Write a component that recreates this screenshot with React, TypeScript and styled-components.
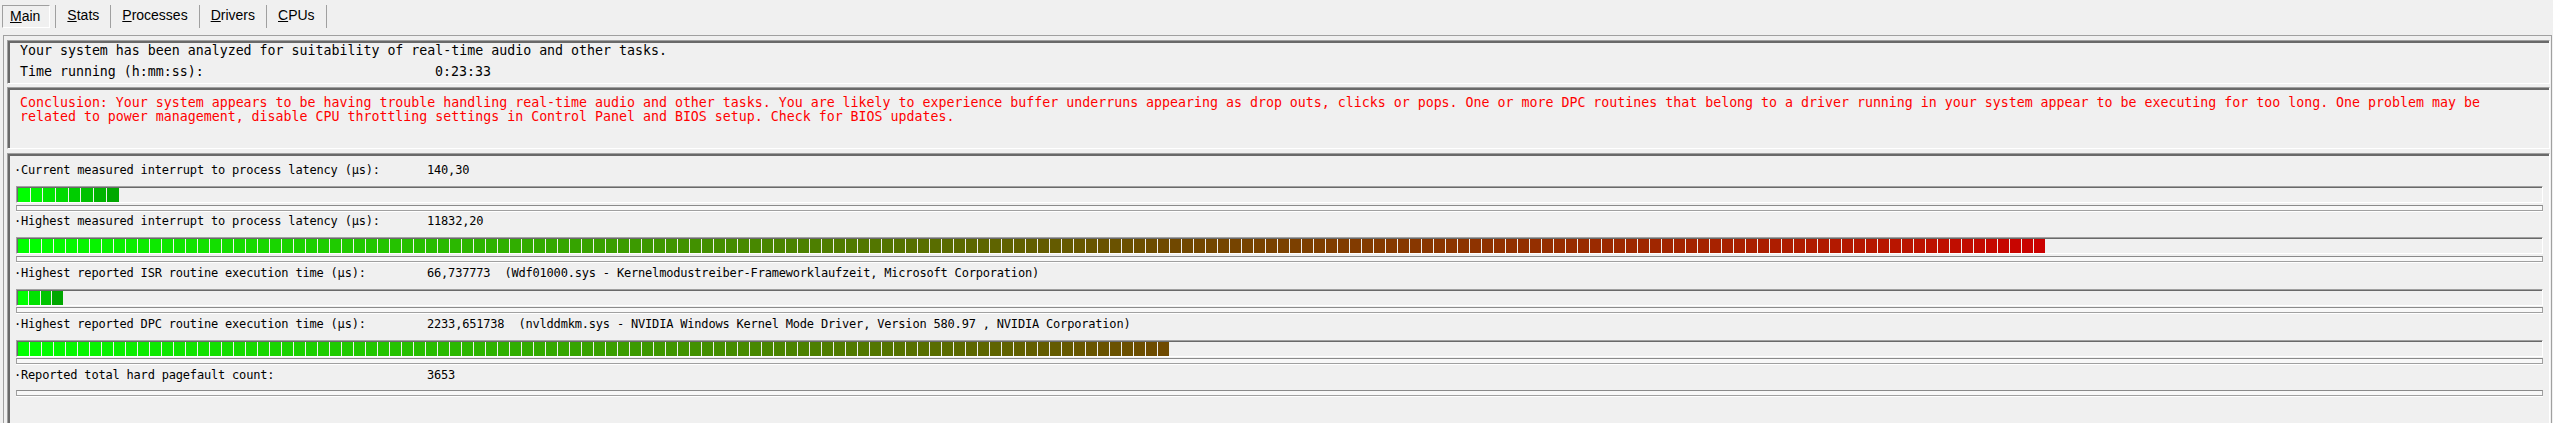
import styled, { createGlobalStyle, css } from 'styled-components';

const GlobalStyle = createGlobalStyle`
  html, body {
    margin: 0;
    padding: 0;
    background: #f0f0f0;
    overflow: hidden;
  }
`;

//Styled component
const Window = styled.div`
  width: 2553px;
  height: 423px;
  background: #f0f0f0;
  display: flex;
  flex-direction: column;
  overflow: hidden;
`;

const TabBar = styled.div`
  height: 35px;
  box-sizing: border-box;
  padding: 5px 0 0 2px;
  display: flex;
  align-items: flex-start;
  font-family: "Liberation Sans", Arial, sans-serif;
  font-size: 14px;
  color: #000;
  flex-shrink: 0;
`;

const Tab = styled.div<{ $active?: boolean; $first?: boolean }>`
  height: 23px;
  box-sizing: border-box;
  line-height: 21px;
  white-space: nowrap;
  ${p => p.$active ? css`
    padding: 0 9px 0 7px;
    border: 1px solid;
    border-color: #a0a0a0 #ffffff #ffffff #a0a0a0;
    margin-right: 5px;
  ` : css`
    padding: 0 11px;
    border-right: 1px solid #a0a0a0;
    ${p.$first && 'border-left: 1px solid #a0a0a0;'}
  `}
`;

const Panel = styled.div`
  flex: 1;
  min-height: 0;
  margin: 0 1px 0 3px;
  border: 1px solid #a0a0a0;
  border-bottom: none;
  padding: 4px 1px 0 3px;
  display: flex;
  flex-direction: column;
`;

const Sunken = styled.div<{ $top?: number }>`
  box-sizing: border-box;
  flex-shrink: 0;
  margin-top: ${p => p.$top ?? 0}px;
  border: 1px solid;
  border-color: #a0a0a0 #ffffff #ffffff #a0a0a0;
  box-shadow: inset 2px 2px 0 #696969;
`;

const InfoBox = styled(Sunken)`
  height: 44px;
  padding: 3px 12px 0 12px;
  font-family: "DejaVu Sans Mono", "Liberation Mono", monospace;
  font-size: 13.28px;
  line-height: 14px;
  color: #000;
`;

const InfoRow = styled.div<{ $gap?: number }>`
  display: grid;
  grid-template-columns: 415px auto;
  height: 14px;
  margin-top: ${p => p.$gap ?? 0}px;
  white-space: pre;
`;

const ConclusionBox = styled(Sunken)`
  height: 62px;
  padding: 8px 12px 0 12px;
  font-family: "DejaVu Sans Mono", "Liberation Mono", monospace;
  font-size: 13.28px;
  line-height: 14px;
  color: #ff0000;
  white-space: pre;
`;

const MetricsBox = styled(Sunken)`
  height: 290px;
  padding: 9px 6px 0 6px;
  font-family: "DejaVu Sans Mono", "Liberation Mono", monospace;
  font-size: 12px;
  letter-spacing: -0.19px;
  line-height: 14px;
  color: #000;
`;

const MetricRow = styled.div`
  display: flex;
  flex-direction: column;
  margin-bottom: 3.75px;
`;

const MetricLabel = styled.div`
  display: grid;
  grid-template-columns: 413px auto;
  height: 14px;
  white-space: pre;
`;

const Track = styled.div`
  margin: 9px 0 0 2px;
  height: 17px;
  box-sizing: border-box;
  border: 1px solid;
  border-color: #a0a0a0 #ffffff #ffffff #a0a0a0;
  box-shadow: inset 1px 1px 0 #696969;
  padding: 1px 0 0 1px;
  display: flex;
  gap: 1px;
  overflow: hidden;
`;

const Block = styled.div<{ $w: number }>`
  width: ${p => p.$w}px;
  height: 14px;
  flex-shrink: 0;
`;

const Rule = styled.div<{ $gap: number }>`
  margin: ${p => p.$gap}px 0 0 2px;
  height: 6px;
  box-sizing: border-box;
  border: 1px solid #a0a0a0;
  border-top-color: #8a8a8a;
  background: #f8f8f8;
  box-shadow: 0 1px 0 #ffffff;
`;
//Styled component

type Scale = 'green' | 'heat';

type Metric = {
  label: string;
  value: string;
  bar?: { count: number; width: number; scale: Scale };
};

const metrics: Metric[] = [
  { label: '·Current measured interrupt to process latency (µs):', value: '140,30', bar: { count: 8, width: 11.7, scale: 'green' } },
  { label: '·Highest measured interrupt to process latency (µs):', value: '11832,20', bar: { count: 169, width: 11, scale: 'heat' } },
  { label: '·Highest reported ISR routine execution time (µs):', value: '66,737773  (Wdf01000.sys - Kernelmodustreiber-Frameworklaufzeit, Microsoft Corporation)', bar: { count: 4, width: 10.4, scale: 'green' } },
  { label: '·Highest reported DPC routine execution time (µs):', value: '2233,651738  (nvlddmkm.sys - NVIDIA Windows Kernel Mode Driver, Version 580.97 , NVIDIA Corporation)', bar: { count: 96, width: 11, scale: 'heat' } },
  { label: '·Reported total hard pagefault count:', value: '3653' },
];

// green -> olive -> brown -> red, by position along the full track
const heatStops: [number, number, number][] = [
  [0, 0, 255],
  [0.29, 58, 158],
  [0.57, 112, 72],
  [0.93, 186, 20],
  [1, 204, 0],
];

function heatColor(t: number) {
  for (let i = 1; i < heatStops.length; i++) {
    const [t1, r1, g1] = heatStops[i];
    const [t0, r0, g0] = heatStops[i - 1];
    if (t <= t1) {
      const k = (t - t0) / (t1 - t0);
      return `rgb(${Math.round(r0 + (r1 - r0) * k)}, ${Math.round(g0 + (g1 - g0) * k)}, 0)`;
    }
  }
  return 'rgb(204, 0, 0)';
}

function blockColor(scale: Scale, i: number, count: number) {
  if (scale === 'green') {
    const t = count > 1 ? i / (count - 1) : 0;
    return `rgb(0, ${Math.round(255 - 87 * t)}, 0)`;
  }
  return heatColor(Math.min(1, (i * 12) / 2026));
}

const tabs = [
  { key: 'M', rest: 'ain' },
  { key: 'S', rest: 'tats' },
  { key: 'P', rest: 'rocesses' },
  { key: 'D', rest: 'rivers' },
  { key: 'C', rest: 'PUs' },
];

function App() {
  return (
    <Window>
      <GlobalStyle />
      <TabBar>
        {tabs.map((t, i) => (
          <Tab key={t.key} $active={i === 0} $first={i === 1}>
            <u>{t.key}</u>{t.rest}
          </Tab>
        ))}
      </TabBar>
      <Panel>
        <InfoBox>
          <InfoRow>
            <span>Your system has been analyzed for suitability of real-time audio and other tasks.</span>
          </InfoRow>
          <InfoRow $gap={6.5}>
            <span>Time running (h:mm:ss):</span>
            <span>0:23:33</span>
          </InfoRow>
        </InfoBox>
        <ConclusionBox $top={3}>
          {'Conclusion: Your system appears to be having trouble handling real-time audio and other tasks. You are likely to experience buffer underruns appearing as drop outs, clicks or pops. One or more DPC routines that belong to a driver running in your system appear to be executing for too long. One problem may be'}
          <br />
          {'related to power management, disable CPU throttling settings in Control Panel and BIOS setup. Check for BIOS updates.'}
        </ConclusionBox>
        <MetricsBox $top={4}>
          {metrics.map(m => (
            <MetricRow key={m.label}>
              <MetricLabel>
                <span>{m.label}</span>
                <span>{m.value}</span>
              </MetricLabel>
              {m.bar && (
                <Track>
                  {Array.from({ length: m.bar.count }, (_, i) => (
                    <Block key={i} $w={m.bar!.width} style={{ background: blockColor(m.bar!.scale, i, m.bar!.count) }} />
                  ))}
                </Track>
              )}
              <Rule $gap={m.bar ? 1.5 : 8} />
            </MetricRow>
          ))}
        </MetricsBox>
      </Panel>
    </Window>
  );
}

export default App;
